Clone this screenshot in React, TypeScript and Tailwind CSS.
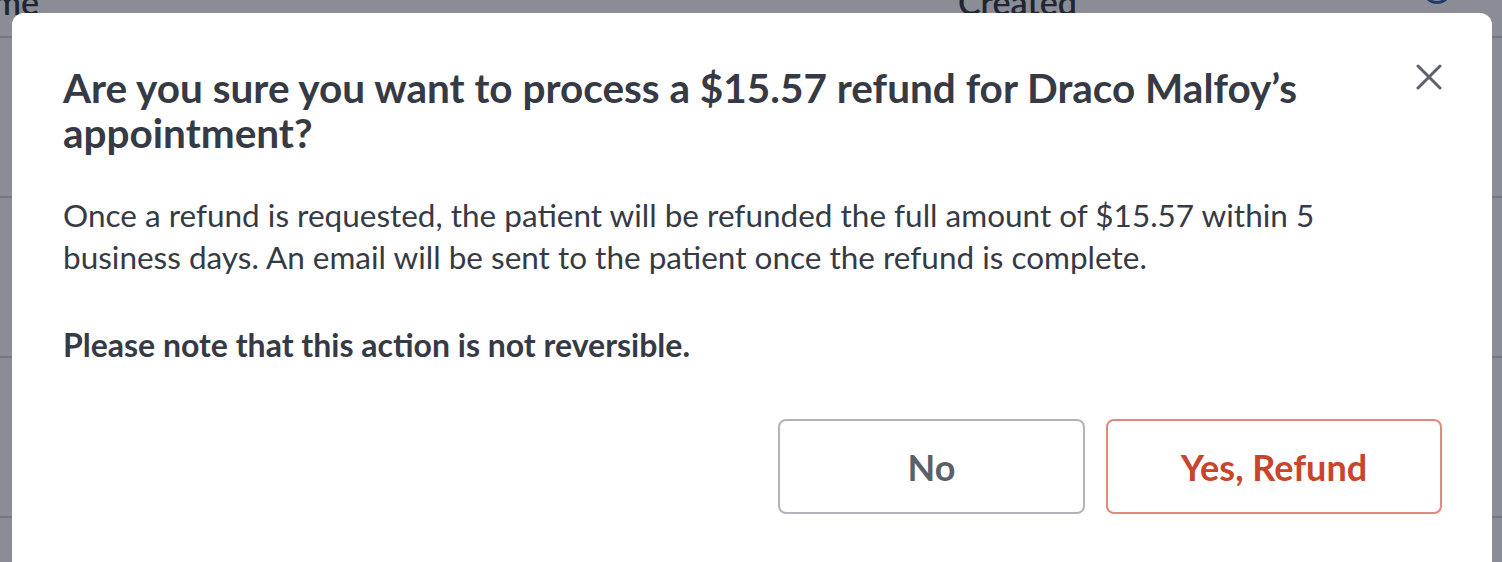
export default function App() {
  return (
    <div className="relative h-[562px] w-[1502px] overflow-hidden bg-white font-['Lato','Liberation_Sans',sans-serif]">
      {/* table behind the dialog */}
      <div className="flex h-[38px] items-start border-b-2 border-gray-300 text-[34px] font-semibold leading-none text-[#2c303b]">
        <div className="-ml-[50px] -mt-[15px] w-[380px]">Name</div>
        <div className="-mt-[15px] w-[628px]">&nbsp;</div>
        <div className="-mt-[15px] w-[464px]">Created</div>
        <div className="-mt-[26px] h-[30px] w-[30px] rounded-full border-[3px] border-[#2f5aa8]" />
      </div>
      <div className="h-[160px] border-b-2 border-gray-300" />
      <div className="h-[160px] border-b-2 border-gray-300" />
      <div className="h-[160px] border-b-2 border-gray-300" />

      {/* overlay */}
      <div className="absolute inset-0 bg-[#161b2c]/50" />

      {/* dialog */}
      <div className="absolute left-[12px] top-[13px] h-[600px] w-[1480px] rounded-[12px] bg-white pl-[51px] pr-[50px] pt-[52px]">
        <div className="flex items-start justify-between">
          <h1 className="max-w-[1290px] text-[40.5px] font-bold leading-[45px] text-[#363a45]">
            Are you sure you want to process a $15.57 refund for Draco Malfoy’s appointment?
          </h1>
          <button className="-mt-[1px] flex h-[26px] w-[26px] items-center justify-center text-[#5d616c]">
            <svg width="26" height="26" viewBox="0 0 26 26" fill="none" stroke="currentColor" strokeWidth="3" strokeLinecap="round">
              <path d="M2 2L24 24M24 2L2 24" />
            </svg>
          </button>
        </div>
        <p className="mt-[39px] max-w-[1310px] text-[31.5px] leading-[42px] text-[#363a45]">
          Once a refund is requested, the patient will be refunded the full amount of $15.57 within 5 business days. An email will be sent to the patient once the refund is complete.
        </p>
        <p className="mt-[46px] text-[32px] font-bold leading-[42px] text-[#363a45]">
          Please note that this action is not reversible.
        </p>
        <div className="mt-[53px] flex justify-end gap-[21px]">
          <button className="h-[95px] w-[307px] rounded-[8px] border-2 border-[#b3b4ba] text-[36px] font-bold text-[#5b5f6a]">
            No
          </button>
          <button className="h-[95px] w-[336px] rounded-[8px] border-2 border-[#e08a7b] text-[36px] font-bold text-[#c7452b]">
            Yes, Refund
          </button>
        </div>
      </div>
    </div>
  );
}
